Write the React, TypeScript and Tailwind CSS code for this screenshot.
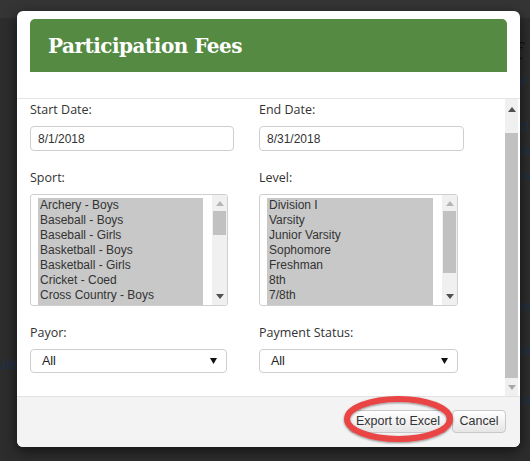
import React from "react";

const sports = [
  "Archery - Boys",
  "Baseball - Boys",
  "Baseball - Girls",
  "Basketball - Boys",
  "Basketball - Girls",
  "Cricket - Coed",
  "Cross Country - Boys",
  "Cross Country - Girls",
];
const levels = [
  "Division I",
  "Varsity",
  "Junior Varsity",
  "Sophomore",
  "Freshman",
  "8th",
  "7/8th",
  "6/7/8th",
];

const label = "h-[18px] leading-[18px] text-[12.5px] text-[#333] font-['Open_Sans',sans-serif]";

function UpTri({ color }: { color: string }) {
  return (
    <svg width="8" height="5" viewBox="0 0 8 5">
      <path d="M0 5 L4 0 L8 5 Z" fill={color} />
    </svg>
  );
}
function DownTri({ color, w = 8, h = 5 }: { color: string; w?: number; h?: number }) {
  return (
    <svg width={w} height={h} viewBox={`0 0 ${w} ${h}`}>
      <path d={`M0 0 L${w / 2} ${h} L${w} 0 Z`} fill={color} />
    </svg>
  );
}

function ListBox({
  items,
  width,
  thumbH,
}: {
  items: string[];
  width: string;
  thumbH: string;
}) {
  return (
    <div className={`${width} h-[112px] border border-[#cfcfcf] rounded-[3px] bg-white flex overflow-hidden`}>
      <div className="flex-1 pl-[7px] pr-[9px] pt-[3px] overflow-hidden">
        <div className="bg-[#c8c8c8] h-full">
          {items.map((t) => (
            <div
              key={t}
              className="h-[15px] leading-[15px] pl-[2px] text-[12px] text-[#333] font-['Liberation_Sans',Arial,sans-serif] whitespace-nowrap"
            >
              {t}
            </div>
          ))}
        </div>
      </div>
      <div className="w-[15px] bg-[#f0f0f0] flex flex-col items-center">
        <div className="h-[16px] flex items-center justify-center">
          <UpTri color="#b5b5b5" />
        </div>
        <div className={`w-[13px] ${thumbH} bg-[#c1c1c1]`} />
        <div className="flex-1" />
        <div className="h-[16px] flex items-center justify-center pb-[2px]">
          <DownTri color="#505050" />
        </div>
      </div>
    </div>
  );
}

function Select({ width }: { width: string }) {
  return (
    <div
      className={`${width} h-[24px] border border-[#cfcfcf] rounded-[4px] bg-white flex items-center pl-[11px] pr-[9px]`}
    >
      <span className="flex-1 text-[12.5px] text-[#222] font-['Liberation_Sans',Arial,sans-serif]">All</span>
      <DownTri color="#111" w={7} h={6} />
    </div>
  );
}

function Input({ value, width }: { value: string; width: string }) {
  return (
    <div
      className={`${width} h-[25px] border border-[#cfcfcf] rounded-[4px] bg-white flex items-center pl-[7px] text-[12px] text-[#333] font-['Liberation_Sans',Arial,sans-serif]`}
    >
      {value}
    </div>
  );
}

export default function App() {
  return (
    <div className="relative w-[530px] h-[461px] overflow-hidden bg-[#2d2d2d]">
      {/* dimmed page underneath */}
      <div className="h-[18px] bg-[#353535]" />
      <div className="flex">
        <div className="w-[17px] pt-[338px] text-[14px] text-[#1c3450] font-['Open_Sans',sans-serif] leading-[16px]">
          <div className="-ml-[2px]">ule</div>
        </div>
        <div className="flex-1" />
        <div className="w-[11px] overflow-hidden font-['Open_Sans',sans-serif] text-[14px] text-[#1c3450] leading-[16px] whitespace-nowrap">
          <div className="mt-[22px] text-[22px] font-['DejaVu_Serif',serif] text-[#111] leading-[24px] -ml-[4px]">f</div>
          <div className="mt-[8px]">e</div>
          <div className="mt-[30px]">ci</div>
          <div className="mt-[9px]">rk</div>
          <div className="mt-[9px]">ne</div>
          <div className="mt-[114px]">en</div>
          <div className="mt-[28px]">ta</div>
          <div className="mt-[34px]">on</div>
        </div>
      </div>

      {/* modal */}
      <div className="absolute left-[17px] top-[11px] w-[503px] h-[436px] bg-white rounded-[6px] shadow-[0_4px_14px_rgba(0,0,0,0.6)] flex flex-col">
        <div className="pt-[8px] px-[13px]">
          <div className="h-[53px] bg-[#548a41] rounded-t-[5px] flex items-center pl-[18px]">
            <span className="text-white font-bold text-[20px] font-['DejaVu_Serif',serif] tracking-[-0.5px]">
              Participation Fees
            </span>
          </div>
        </div>
        <div className="h-[26px]" />
        <div className="h-px bg-[#e5e5e5]" />
        <div className="h-[297px] flex">
          <div className="flex-1 pl-[13px] pt-[2px] overflow-hidden">
            <div className="grid grid-cols-[229px_229px]">
              <div className="flex flex-col">
                <div className={label}>Start Date:</div>
                <div className="h-[7px]" />
                <Input value="8/1/2018" width="w-[204px]" />
                <div className="h-[18px]" />
                <div className={label}>Sport:</div>
                <div className="h-[7px]" />
                <ListBox items={sports} width="w-[198px]" thumbH="h-[24px]" />
                <div className="h-[18px]" />
                <div className={label}>Payor:</div>
                <div className="h-[7px]" />
                <Select width="w-[197px]" />
              </div>
              <div className="flex flex-col">
                <div className={label}>End Date:</div>
                <div className="h-[7px]" />
                <Input value="8/31/2018" width="w-[205px]" />
                <div className="h-[18px]" />
                <div className={label}>Level:</div>
                <div className="h-[7px]" />
                <ListBox items={levels} width="w-[199px]" thumbH="h-[62px]" />
                <div className="h-[18px]" />
                <div className={label}>Payment Status:</div>
                <div className="h-[7px]" />
                <Select width="w-[199px]" />
              </div>
            </div>
          </div>
          <div className="w-[13px] mr-[2px] bg-[#f0f0f0] flex flex-col items-center">
            <div className="h-[20px] flex items-center justify-center">
              <UpTri color="#505050" />
            </div>
            <div className="h-[14px]" />
            <div className="w-[13px] h-[245px] bg-[#c1c1c1]" />
            <div className="flex-1 flex items-center justify-center">
              <DownTri color="#a8a8a8" />
            </div>
          </div>
        </div>
        <div className="h-px bg-[#e2e2e2]" />
        <div className="relative flex-1 bg-[#f3f3f3] rounded-b-[6px] flex items-center justify-end pr-[14px] gap-[5px] pb-[1px]">
          <button className="h-[23px] w-[98px] border border-[#c8c8c8] rounded-[4px] bg-gradient-to-b from-white to-[#e6e6e6] text-[12.5px] text-[#333] font-['Liberation_Sans',Arial,sans-serif]">
            Export to Excel
          </button>
          <button className="h-[23px] w-[54px] border border-[#c8c8c8] rounded-[4px] bg-gradient-to-b from-white to-[#e6e6e6] text-[12.5px] text-[#333] font-['Liberation_Sans',Arial,sans-serif]">
            Cancel
          </button>
          <svg
            className="absolute left-[324px] top-[-2px] pointer-events-none"
            width="116"
            height="52"
            viewBox="0 0 116 52"
          >
            <defs>
              <filter id="sh" x="-20%" y="-30%" width="140%" height="160%">
                <feDropShadow dx="0" dy="1" stdDeviation="1.2" floodColor="#000" floodOpacity="0.45" />
              </filter>
            </defs>
            <ellipse
              cx="57.5"
              cy="24"
              rx="51.5"
              ry="20"
              fill="none"
              stroke="#ea4444"
              strokeWidth="6"
              filter="url(#sh)"
            />
          </svg>
        </div>
      </div>
    </div>
  );
}
